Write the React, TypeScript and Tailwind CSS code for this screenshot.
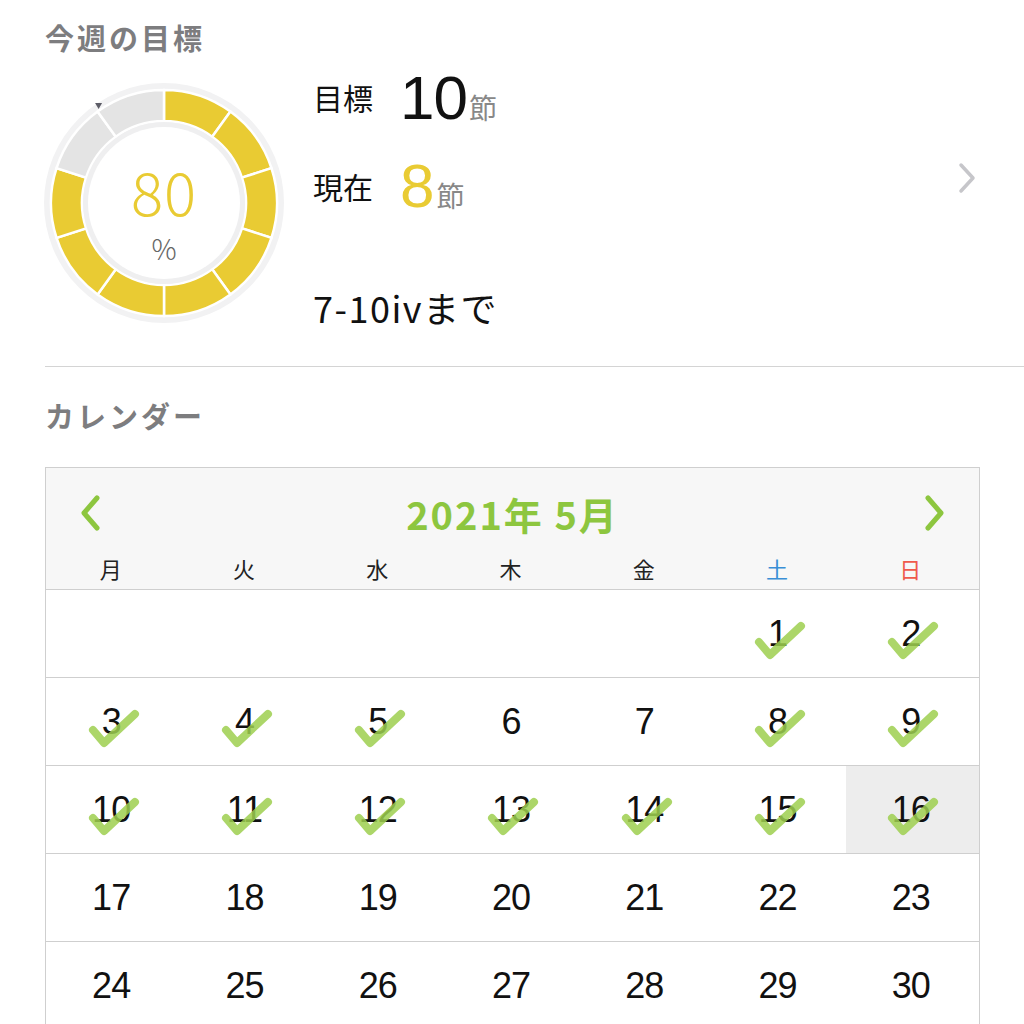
import React from 'react';

const YELLOW = '#e9cb33';
const GREEN = '#8dc63f';

const checked = new Set([1, 2, 3, 4, 5, 8, 9, 10, 11, 12, 13, 14, 15, 16]);

function pt(r: number, a: number): [number, number] {
  const rad = (a * Math.PI) / 180;
  return [120 + r * Math.sin(rad), 120 - r * Math.cos(rad)];
}

function sector(r0: number, r1: number, a0: number, a1: number) {
  const [x0, y0] = pt(r1, a0);
  const [x1, y1] = pt(r1, a1);
  const [x2, y2] = pt(r0, a1);
  const [x3, y3] = pt(r0, a0);
  return `M${x0} ${y0} A${r1} ${r1} 0 0 1 ${x1} ${y1} L${x2} ${y2} A${r0} ${r0} 0 0 0 ${x3} ${y3} Z`;
}

function Ring() {
  const segs = Array.from({ length: 10 }, (_, i) => i);
  const [tx, ty] = pt(117, 326);
  return (
    <div className="relative w-[240px] h-[240px] shrink-0">
      <svg width="240" height="240" viewBox="0 0 240 240">
        <circle cx="120" cy="120" r="120" fill="#f2f2f3" />
        {segs.map((i) => (
          <path
            key={i}
            d={sector(82, 113, i * 36, (i + 1) * 36)}
            fill={i < 8 ? YELLOW : '#e4e4e4'}
            stroke="#ffffff"
            strokeWidth="2.5"
          />
        ))}
        <circle cx="120" cy="120" r="81" fill="#efeff0" />
        <circle cx="120" cy="120" r="76" fill="#ffffff" />
        <path d={`M${tx - 3.5} ${ty - 3} L${tx + 3.5} ${ty - 3} L${tx} ${ty + 3} Z`} fill="#5c5c66" />
      </svg>
      <div className="absolute inset-0 flex flex-col items-center justify-center pt-[16px]">
        <span className="text-[60px] leading-none font-light text-[#e9cb33] tracking-[1px]">80</span>
        <span className="text-[28px] leading-none font-light text-[#666] mt-[14px]">%</span>
      </div>
    </div>
  );
}

function Check() {
  return (
    <svg className="absolute left-1/2 top-1/2 -translate-x-1/2 -translate-y-1/2 pointer-events-none" width="60" height="60" viewBox="-30 -30 60 60">
      <path d="M-20 8 L-9 21 L22 -8" fill="none" stroke="#9dcf4f" strokeWidth="8" strokeLinecap="round" strokeLinejoin="round" opacity="0.85" />
    </svg>
  );
}

export default function App() {
  const weeks: (number | null)[][] = [
    [null, null, null, null, null, 1, 2],
    [3, 4, 5, 6, 7, 8, 9],
    [10, 11, 12, 13, 14, 15, 16],
    [17, 18, 19, 20, 21, 22, 23],
    [24, 25, 26, 27, 28, 29, 30],
  ];
  const days = ['月', '火', '水', '木', '金', '土', '日'];

  return (
    <div className="w-[1024px] h-[1024px] overflow-hidden bg-white font-['Noto_Sans_CJK_JP','Noto_Sans',sans-serif]">
      <div className="pl-[45px] pt-[17px]">
        <h2 className="text-[29px] leading-[40px] font-bold text-[#7d7d7f] tracking-[3px]">今週の目標</h2>
        <div className="flex mt-[26px] ml-[-1px]">
          <Ring />
          <div className="flex-1 flex pl-[29px]">
            <div className="flex flex-col">
              <div className="flex items-baseline h-[60px] mt-[-16px]">
                <span className="relative top-[-9px] text-[30px] text-[#111] w-[87px]">目標</span>
                <span className="text-[62px] leading-none text-[#111] font-['Liberation_Sans'] tracking-[-1px]">10</span>
                <span className="text-[28px] text-[#888] ml-[2px]">節</span>
              </div>
              <div className="flex items-baseline h-[60px] mt-[28px]">
                <span className="relative top-[-8px] text-[30px] text-[#111] w-[87px]">現在</span>
                <span className="text-[62px] leading-none text-[#e9cb33] font-['Liberation_Sans']">8</span>
                <span className="text-[28px] text-[#888] ml-[2px]">節</span>
              </div>
              <div className="text-[36px] leading-[40px] text-[#111] mt-[72px] tracking-[1.5px]">7-10ivまで</div>
            </div>
            <div className="flex-1 flex justify-end pr-[47px] pt-[79px]">
              <svg width="20" height="32" viewBox="0 0 20 32">
                <path d="M4 3 L16 16 L4 29" fill="none" stroke="#c6c6ca" strokeWidth="3.5" strokeLinecap="round" strokeLinejoin="round" />
              </svg>
            </div>
          </div>
        </div>
      </div>

      <div className="ml-[45px] mt-[39px] border-t border-[#d4d4d4]" />

      <div className="pl-[45px]">
        <h2 className="text-[29px] leading-[40px] font-bold text-[#7d7d7f] tracking-[3px] mt-[28px]">カレンダー</h2>
        <div className="w-[935px] mt-[32px] border border-[#cfcfcf]">
          <div className="bg-[#f7f7f7] h-[122px] border-b border-[#cfcfcf] flex flex-col">
            <div className="flex items-center justify-between h-[84px] px-[32px] pt-[6px]">
              <svg width="24" height="38" viewBox="0 0 24 38">
                <path d="M19 4 L6 19 L19 34" fill="none" stroke={GREEN} strokeWidth="5" strokeLinecap="round" strokeLinejoin="round" />
              </svg>
              <span className="text-[38px] font-bold text-[#8dc63f] tracking-[2px]">2021年 5月</span>
              <svg width="24" height="38" viewBox="0 0 24 38">
                <path d="M5 4 L18 19 L5 34" fill="none" stroke={GREEN} strokeWidth="5" strokeLinecap="round" strokeLinejoin="round" />
              </svg>
            </div>
            <div className="grid grid-cols-7 flex-1">
              {days.map((d, i) => (
                <div
                  key={d}
                  className={
                    'flex items-center justify-center text-[22px] pb-[4px] pr-[4px] ' +
                    (i === 5 ? 'text-[#3a8fd6]' : i === 6 ? 'text-[#ef5a4c]' : 'text-[#222]')
                  }
                >
                  {d}
                </div>
              ))}
            </div>
          </div>
          {weeks.map((w, wi) => (
            <div key={wi} className="grid grid-cols-7 h-[88px] border-b border-[#cfcfcf]">
              {w.map((n, di) => (
                <div
                  key={di}
                  className={
                    'relative flex items-center justify-center pr-[3px] ' + (n === 16 ? 'bg-[#ededed]' : '')
                  }
                >
                  {n !== null && (
                    <span className="text-[36px] text-[#111] font-['Liberation_Sans'] tracking-[-1px]">{n}</span>
                  )}
                  {n !== null && checked.has(n) && <Check />}
                </div>
              ))}
            </div>
          ))}
        </div>
      </div>
    </div>
  );
}
